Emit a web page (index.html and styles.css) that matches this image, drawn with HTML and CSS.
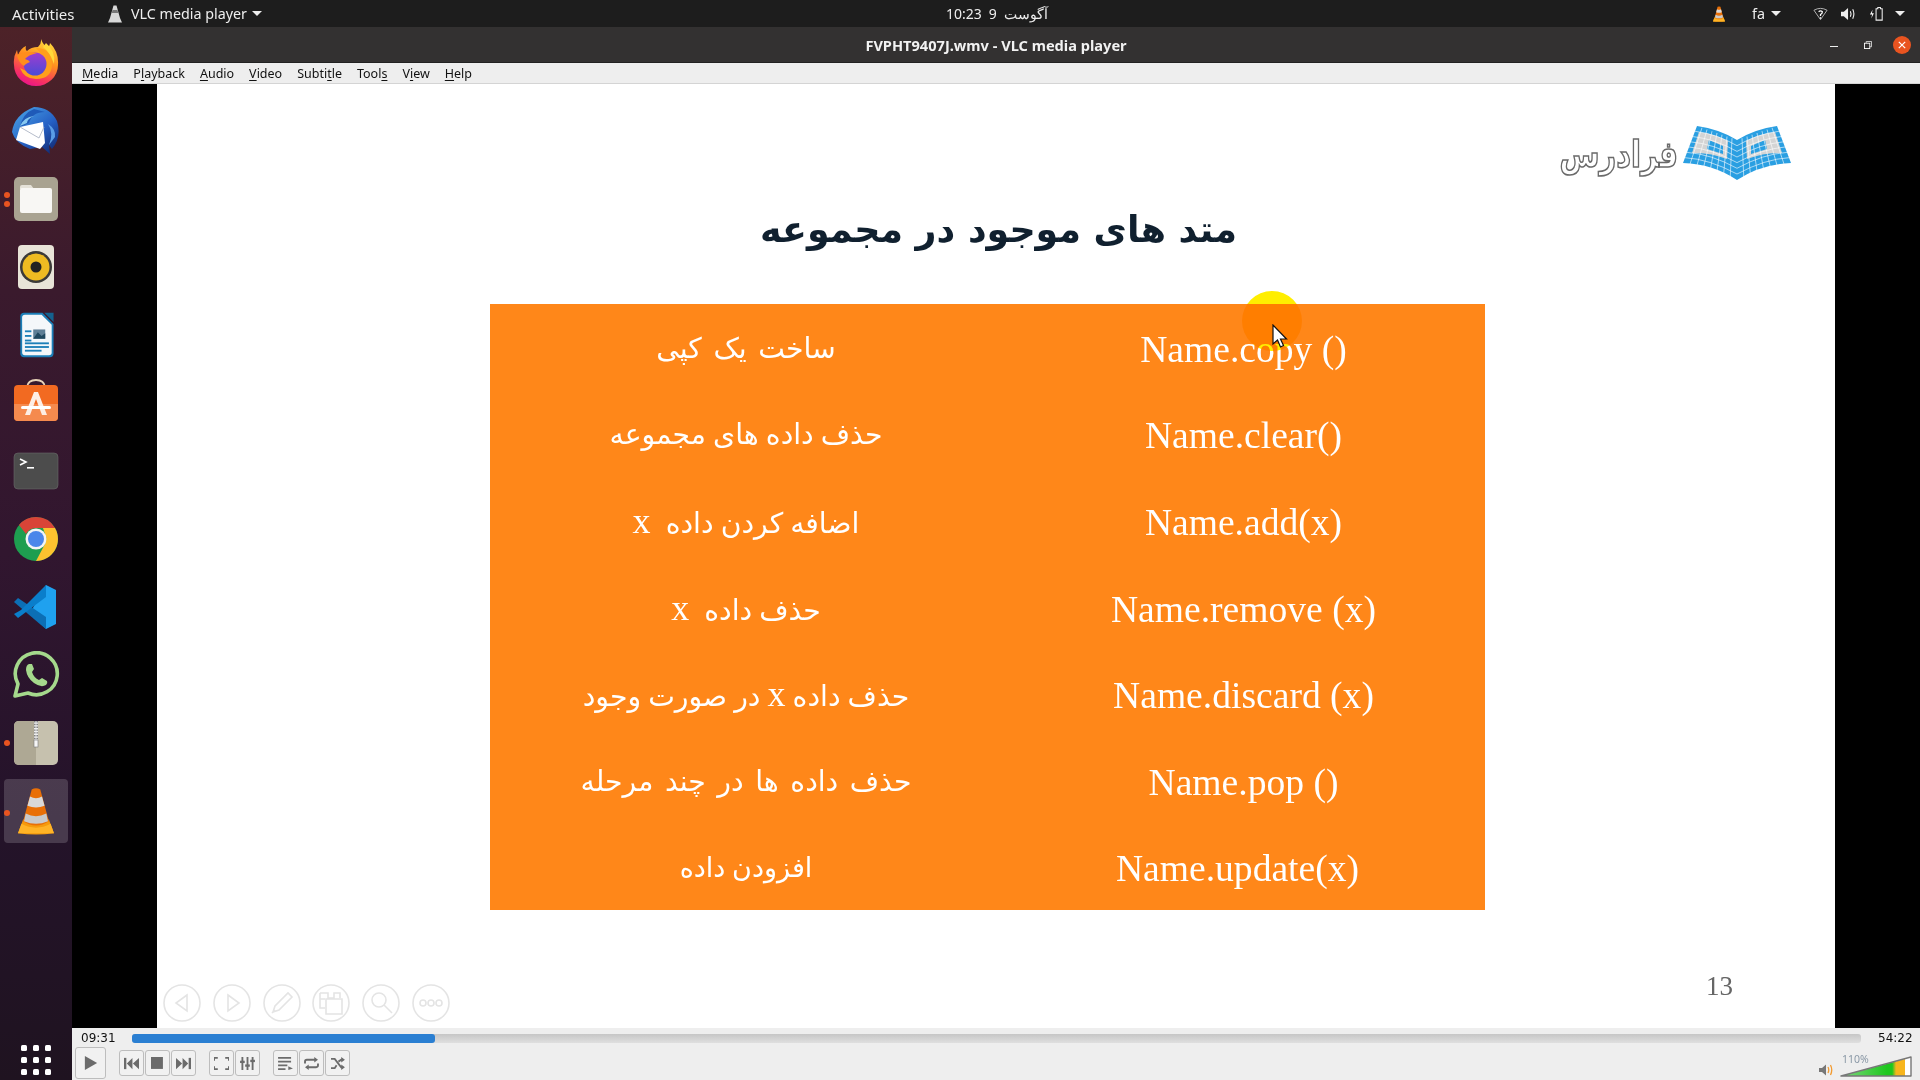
FILE: index.html
```html
<!DOCTYPE html>
<html lang="fa">
<head>
    <meta charset="UTF-8">
    <title>FVPHT9407J.wmv - VLC media player</title>
    <link rel="stylesheet" href="styles.css">
</head>
<body>
    <svg class="defs" width="0" height="0">
        <defs>
            <symbol id="cone" viewBox="0 0 48 56">
                <path d="M3 54 L9 38 H39 L45 54 Q24 57 3 54Z" fill="#f59a0c"/>
                <path d="M3 54 L7 43 Q24 52 41 43 L45 54Z" fill="#ffb326"/>
                <path d="M19 3 Q24 0 29 3 L39 40 Q24 50 9 40Z" fill="#e96f06"/>
                <path d="M17 11 Q24 15 31 11 L34 22 Q24 26 14 22Z" fill="#d9d9d9"/>
                <path d="M12 31 Q24 37 36 31 L38 40 Q24 46 10 40Z" fill="#c9c9c9"/>
            </symbol>
            <g id="page">
                <path class="page-blue" d="M14 0 Q36 3 54 14 V54 Q30 38 0 37Z"/>
                <path class="page-grey" d="M16 6 Q32 8 45 15 L44 33 Q26 26 9 27Z"/>
                <path class="page-blue" d="M26 14 L40 20 V28 L24 23Z"/>
                <path class="page-grid" d="M19 1.7 L6.7 39 M24 3.5 L13.5 41 M29 5.2 L20.2 43 M34 7 L27 45.5 M39 8.7 L33.7 47.6 M44 10.5 L40.5 49.7 M49 12.2 L47.2 51.9 M12 5.3 Q34 8 54 19.7 M10 10.6 Q32 13 54 25.4 M8 15.9 Q31 18 54 31 M6 21 Q29 23 54 36.6 M4 26.4 Q28 28 54 42.3 M2 31.7 Q26 33 54 48"/>
            </g>
        </defs>
    </svg>

    <header class="topbar">
        <div class="top-left">
            <span class="activities">Activities</span>
            <svg class="app-cone" viewBox="0 0 14 18"><path d="M5.5 0.5 H8.5 L12 13 L14 17.5 H0 L2 13Z" fill="#d8d8d8"/><path d="M4.5 5 H9.5 L10.3 8 H3.7Z" fill="#777"/></svg>
            <span class="app-name">VLC media player</span>
            <i class="caret"></i>
        </div>
        <div class="clock"><span>10:23</span><span>9</span><span dir="rtl">آگوست</span></div>
        <div class="tray">
            <svg class="tray-cone"><use href="#cone"/></svg>
            <span class="lang">fa</span>
            <i class="caret"></i>
            <svg class="tray-icon wifi" viewBox="0 0 16 14"><path d="M1 3 Q8 -1 15 3 L8 13Z" fill="none" stroke="#bbb" stroke-width="1"/><path d="M6 4.5 Q8 3 10 4.5 Q10 6.5 8 7.5 V9 M8 10.5 V12" fill="none" stroke="#fff" stroke-width="1.3"/></svg>
            <svg class="tray-icon vol" viewBox="0 0 16 14"><path d="M0 4.5 H3 L7.5 0.5 V13.5 L3 9.5 H0Z" fill="#eee"/><path d="M10 4 Q11.5 7 10 10 M12.5 2 Q15 7 12.5 12" fill="none" stroke="#eee" stroke-width="1.2"/></svg>
            <svg class="tray-icon batt" viewBox="0 0 16 16"><path d="M3.5 3 L0.5 8.5 H3 L2 13 L5 7 H2.8Z" fill="#fff"/><path d="M8 2 H9.5 V0.5 H12.5 V2 H14.5 V15 H7.5 V2Z" fill="none" stroke="#eee" stroke-width="1.2"/></svg>
            <i class="caret"></i>
        </div>
    </header>

    <div class="desktop">
        <nav class="dock">
            <div class="dock-item">
                <svg viewBox="0 1 48 48">
                    <defs>
                        <linearGradient id="fx" x1="0.75" y1="0" x2="0.35" y2="1"><stop offset="0" stop-color="#ffe13f"/><stop offset="0.45" stop-color="#ff8f1f"/><stop offset="0.8" stop-color="#f8345f"/><stop offset="1" stop-color="#e9148a"/></linearGradient>
                        <linearGradient id="fg" x1="0.5" y1="0" x2="0.5" y2="1"><stop offset="0" stop-color="#a03ccf"/><stop offset="1" stop-color="#4a4bd6"/></linearGradient>
                    </defs>
                    <path d="M29 0 Q30 6 36 10 Q38 7 38 5 Q47 14 46 27 A22 21 0 0 1 2 27 Q1 19 5 12 L6 17 Q9 10 14 8 Q13 12 15 13 Q19 9 26 9 Q30 5 29 0Z" fill="url(#fx)"/>
                    <path d="M24 10 Q40 10 40 26 Q40 41 24 41 Q12 41 8 30 Q22 38 30 28 Q34 20 24 10Z" fill="#ff9f1c"/>
                    <circle cx="23" cy="26" r="11.5" fill="url(#fg)"/>
                    <path d="M5 17 Q13 12 25 15 Q16 17 13 21 Q17 22 18 24 Q13 26 12 28 Q6 24 5 17Z" fill="#ff8d1c"/>
                    <path d="M34 5 Q44 13 42 26 Q38 14 31 9Z" fill="#ffd93a"/>
                </svg>
            </div>
            <div class="dock-item">
                <svg viewBox="0 0 48 48">
                    <defs><linearGradient id="tb" x1="0.1" y1="0" x2="0.9" y2="1"><stop offset="0" stop-color="#4ba4e6"/><stop offset="0.55" stop-color="#2560c4"/><stop offset="1" stop-color="#10276f"/></linearGradient></defs>
                    <path d="M22 0 Q38 0 45 14 Q50 30 40 42 L37 38 L38 47 L30 40 L18 42 Q3 36 0 25 Q2 8 22 0Z" fill="url(#tb)"/>
                    <path d="M8 20 Q11 6 22 2 L33 5 Q20 5 17 16Z" fill="#1f5ab8"/>
                    <path d="M8 19 Q12 10 22 9 Q15 12 15 16Z" fill="#86c8f0"/>
                    <path d="M8 20 L31 15 L33 36 L28 42 L4 33Z" fill="#fff"/>
                    <path d="M8 20 L27 31 L32 20" fill="none" stroke="#adb4c4" stroke-width="0.9"/>
                    <path d="M36 17 Q42 26 37 38 L43 30 Q44 22 36 17Z" fill="#5a9de6"/>
                </svg>
            </div>
            <div class="dock-item">
                <svg viewBox="0 0 48 48">
                    <rect x="2" y="2" width="44" height="44" rx="5" fill="#a9a391"/>
                    <path d="M8 12 Q8 10 10 10 H19 L22 14 H8Z" fill="#e5e2d8"/>
                    <rect x="8" y="13" width="32" height="25" rx="2" fill="#f8f7f4"/>
                </svg>
                <i class="dot dot-top"></i><i class="dot dot-low"></i>
            </div>
            <div class="dock-item">
                <svg viewBox="0 0 48 48">
                    <rect x="6" y="2" width="36" height="44" rx="4" fill="#e8e4d8"/>
                    <circle cx="24" cy="24" r="16" fill="#3b3a38"/>
                    <circle cx="24" cy="24" r="13.5" fill="#eebb22"/>
                    <circle cx="24" cy="24" r="5.5" fill="#222"/>
                </svg>
            </div>
            <div class="dock-item">
                <svg viewBox="0 -2 48 52">
                    <path d="M7 4 Q7 0 11 0 H31 L43 12 V44 Q43 48 39 48 H11 Q7 48 7 44Z" fill="#1c7fb8"/>
                    <path d="M9 5 Q9 2 12 2 H30 L41 13 V43 Q41 46 38 46 H12 Q9 46 9 43Z" fill="#f4f7fa"/>
                    <path d="M33 0 H43 V10Z" fill="#15628f"/>
                    <rect x="12" y="19" width="7" height="2" fill="#1c7fb8"/><rect x="12" y="24" width="7" height="2" fill="#1c7fb8"/><rect x="12" y="29" width="7" height="2" fill="#1c7fb8"/>
                    <rect x="21" y="18" width="13" height="10" fill="#5f7f96"/><path d="M21 28 L26 21 L30 25 L34 22 V28Z" fill="#20485f"/>
                    <rect x="12" y="32" width="26" height="2" fill="#1c7fb8"/><rect x="12" y="36" width="26" height="2" fill="#1c7fb8"/><rect x="12" y="40" width="18" height="2" fill="#1c7fb8"/>
                </svg>
            </div>
            <div class="dock-item">
                <svg viewBox="0 0 48 48">
                    <path d="M15 8 Q16 1 24 1 Q32 1 33 8" fill="none" stroke="#e8d3b8" stroke-width="1.8"/>
                    <rect x="2" y="6" width="44" height="36" rx="4" fill="#f26a21"/>
                    <path d="M2 25 H46 V38 Q46 42 42 42 H6 Q2 42 2 38Z" fill="#f58a4e"/>
                    <path d="M22 13 H26 L35 36 H30 L24 20 L18 36 H13Z" fill="#fdeee5"/>
                    <rect x="9" y="27" width="30" height="3" rx="1.5" fill="#fff"/>
                </svg>
            </div>
            <div class="dock-item">
                <svg viewBox="0 0 48 48">
                    <rect x="2" y="6" width="44" height="36" rx="4" fill="#4c4c4c"/>
                    <rect x="2" y="6" width="44" height="36" rx="4" fill="none" stroke="#6a6a6a" stroke-width="0.6"/>
                    <path d="M8 12 L14 15 L8 18" fill="none" stroke="#fff" stroke-width="1.6"/>
                    <rect x="15" y="20" width="7" height="1.6" fill="#fff"/>
                </svg>
            </div>
            <div class="dock-item">
                <svg viewBox="0 0 48 48">
                    <circle cx="24" cy="24" r="22" fill="#1e9e50"/>
                    <path d="M24 2 A22 22 0 0 1 43 13 H24 A11 11 0 0 0 14 19 L7 10 A22 22 0 0 1 24 2Z" fill="#d94437"/>
                    <path d="M43 13 A22 22 0 0 1 24 46 L33 29 A11 11 0 0 0 33 19 L31 13Z" fill="#fdc22f"/>
                    <circle cx="24" cy="24" r="10.5" fill="#f4f4f4"/>
                    <circle cx="24" cy="24" r="8" fill="#4a86ea"/>
                </svg>
            </div>
            <div class="dock-item">
                <svg viewBox="0 0 48 48">
                    <path d="M34 2 L44 7 V41 L34 46 L18 30 Z" fill="#1fa1ef"/>
                    <path d="M6 15 L2 19 L29 42 L34 46 V34Z" fill="#0c6fb5"/>
                    <path d="M34 2 L9 27 L2 31 L6 35 L34 14Z" fill="#0a7ecb"/>
                </svg>
            </div>
            <div class="dock-item">
                <svg viewBox="0 0 48 48">
                    <path d="M3 45 L6 33 A21 21 0 1 1 16 42Z" fill="none" stroke="#a5d98c" stroke-width="3.6" stroke-linejoin="round"/>
                    <path d="M17 13 Q14 14 14 19 Q15 27 22 32 Q29 37 34 34 Q36 32 35 30 L30 27 L27 29 Q22 27 20 21 L22 18 L20 13Z" fill="#a5d98c"/>
                </svg>
            </div>
            <div class="dock-item">
                <svg viewBox="0 0 48 48">
                    <rect x="2" y="2" width="44" height="44" rx="5" fill="#c6c1ae"/>
                    <path d="M7 2 H24 V46 H7 Q2 46 2 41 V7 Q2 2 7 2Z" fill="#aea894"/>
                    <path d="M22 2 H26 V24 H22Z" fill="#eee"/>
                    <path d="M22.8 2 V24 M25.2 2 V24" stroke="#777" stroke-width="1.4" stroke-dasharray="1.4 1.4"/>
                    <rect x="22" y="21" width="4" height="7" fill="#f6f6f6" stroke="#777" stroke-width="0.6"/>
                </svg>
                <i class="dot"></i>
            </div>
            <div class="dock-item active">
                <svg class="dock-cone"><use href="#cone"/></svg>
                <i class="dot"></i>
            </div>
            <div class="apps-grid">
                <i></i><i></i><i></i><i></i><i></i><i></i><i></i><i></i><i></i>
            </div>
        </nav>

        <div class="window">
            <div class="titlebar">
                <span></span>
                <span class="win-title">FVPHT9407J.wmv - VLC media player</span>
                <div class="win-btns">
                    <i class="win-min"></i>
                    <svg class="win-max" viewBox="0 0 9 9"><path d="M2.5 2 V0.5 H8.5 V6.5 H6.5" fill="none" stroke="#ddd"/><rect x="0.5" y="2.5" width="6" height="6" fill="none" stroke="#fff"/></svg>
                    <span class="win-close"><svg viewBox="0 0 10 10"><path d="M1 1 L9 9 M9 1 L1 9" stroke="#fff" stroke-width="1.5"/></svg></span>
                </div>
            </div>

            <div class="menubar">
                <span><u>M</u>edia</span>
                <span>P<u>l</u>ayback</span>
                <span><u>A</u>udio</span>
                <span><u>V</u>ideo</span>
                <span>Subti<u>t</u>le</span>
                <span>Tool<u>s</u></span>
                <span>V<u>i</u>ew</span>
                <span><u>H</u>elp</span>
            </div>

            <div class="video">
                <div class="slide">
                    <div class="logo">
                        <span class="logo-text" dir="rtl">فرادرس</span>
                        <svg class="logo-book" viewBox="0 0 108 54">
                            <use href="#page"/>
                            <use href="#page" transform="matrix(-1 0 0 1 108 0)"/>
                        </svg>
                    </div>

                    <h1 class="slide-title" dir="rtl">متد های موجود در مجموعه</h1>

                    <div class="methods">
                        <div class="fa loose" dir="rtl">ساخت یک کپی</div>
                        <div class="en">Name.copy ()</div>
                        <div class="fa" dir="rtl">حذف داده های مجموعه</div>
                        <div class="en">Name.clear()</div>
                        <div class="fa" dir="rtl">اضافه کردن داده <span class="var wide">x</span></div>
                        <div class="en">Name.add(x)</div>
                        <div class="fa" dir="rtl">حذف داده <span class="var wide">x</span></div>
                        <div class="en">Name.remove (x)</div>
                        <div class="fa" dir="rtl">حذف داده <span class="var">x</span> در صورت وجود</div>
                        <div class="en">Name.discard (x)</div>
                        <div class="fa loose" dir="rtl">حذف داده ها در چند مرحله</div>
                        <div class="en">Name.pop ()</div>
                        <div class="fa tight" dir="rtl">افزودن داده</div>
                        <div class="en off-left">Name.update(x)</div>
                    </div>

                    <span class="page-num">13</span>

                    <div class="slide-nav">
                        <svg viewBox="0 0 38 38"><circle cx="19" cy="19" r="18"/><path d="M24 11 L13 19 L24 27Z"/></svg>
                        <svg viewBox="0 0 38 38"><circle cx="19" cy="19" r="18"/><path d="M15 11 L26 19 L15 27Z"/></svg>
                        <svg viewBox="0 0 38 38"><circle cx="19" cy="19" r="18"/><path d="M10 28 L12 22 L25 9 L29 13 L16 26Z M9 29 L12 26"/></svg>
                        <svg viewBox="0 0 38 38"><circle cx="19" cy="19" r="18"/><path d="M8 9 H16 V14 H22 V9 H28 V14 M8 9 V24 H13 M8 15 H13 M14 15 H30 V30 H14Z"/></svg>
                        <svg viewBox="0 0 38 38"><circle cx="19" cy="19" r="18"/><circle cx="17" cy="16" r="7"/><path d="M22 21 L30 29"/></svg>
                        <svg viewBox="0 0 38 38"><circle cx="19" cy="19" r="18"/><circle cx="11" cy="19" r="3"/><circle cx="19" cy="19" r="3"/><circle cx="27" cy="19" r="3"/></svg>
                    </div>

                    <i class="highlight"></i>
                    <svg class="pointer" viewBox="0 0 16 24"><path d="M1 1 V20 L5.5 16 L8.5 23 L11.5 21.5 L8.5 15 H14.5Z" fill="#fff" stroke="#111" stroke-width="1.2"/></svg>
                </div>
            </div>

            <footer class="controls">
                <div class="seek-row">
                    <span class="time">09:31</span>
                    <div class="seek"><div class="seek-fill"></div></div>
                    <span class="time">54:22</span>
                </div>
                <div class="btn-row">
                    <button class="ctl play"><svg viewBox="0 0 16 18"><path d="M1 1 L15 9 L1 17Z"/></svg></button>
                    <div class="ctl-group">
                        <button class="ctl"><svg viewBox="0 0 16 12"><rect x="0" y="0" width="2.5" height="12"/><path d="M9 0 V12 L3 6Z M16 0 V12 L9.5 6Z"/></svg></button>
                        <button class="ctl"><svg viewBox="0 0 12 12"><rect width="11" height="11"/></svg></button>
                        <button class="ctl"><svg viewBox="0 0 16 12"><path d="M0 0 V12 L6.5 6Z M7 0 V12 L13 6Z"/><rect x="13.5" y="0" width="2.5" height="12"/></svg></button>
                    </div>
                    <div class="ctl-group">
                        <button class="ctl"><svg viewBox="0 0 16 14"><path class="ln" d="M0 4 V1 H4 M12 1 H16 V4 M0 10 V13 H4 M12 13 H16 V10"/></svg></button>
                        <button class="ctl"><svg viewBox="0 0 16 14"><path class="ln" d="M2.5 0 V14 M8 0 V14 M13.5 0 V14"/><rect x="0" y="4" width="5" height="2.5"/><rect x="5.5" y="8" width="5" height="2.5"/><rect x="11" y="3" width="5" height="2.5"/></svg></button>
                    </div>
                    <div class="ctl-group">
                        <button class="ctl"><svg viewBox="0 0 16 14"><path class="ln" d="M0 1 H14 M0 5 H14 M0 9 H10 M0 13 H8"/><path d="M11 10 L16 12.5 L11 14Z"/></svg></button>
                        <button class="ctl"><svg viewBox="0 0 16 14"><path class="ln" d="M1 7 V5 Q1 3 3 3 H12 M15 7 V9 Q15 11 13 11 H4"/><path d="M11 0 L15 3 L11 6Z M5 8 L1 11 L5 14Z"/></svg></button>
                        <button class="ctl"><svg viewBox="0 0 16 14"><path class="ln" d="M1 2 L5 2 L12 11 H14 M1 12 H5 L7 9 M9 5 L12 3 H14"/><path d="M12 0 L16 3 L12 6Z M12 8 L16 11 L12 14Z"/></svg></button>
                    </div>
                    <div class="volume">
                        <svg class="vol-icon" viewBox="0 0 14 12"><path d="M0 4 H3 L7 0.5 V11.5 L3 8 H0Z" fill="#777"/><path d="M9 3 Q10.5 6 9 9 M11.5 1 Q14 6 11.5 11" fill="none" stroke="#f39a2e" stroke-width="1.3"/></svg>
                        <span class="vol-text">110%</span>
                        <svg class="vol-bar" viewBox="0 0 72 21">
                            <defs><linearGradient id="vg" x1="0" y1="0" x2="1" y2="0"><stop offset="0" stop-color="#7fd67f"/><stop offset="0.72" stop-color="#1ec71e"/><stop offset="0.8" stop-color="#1ec71e"/><stop offset="0.86" stop-color="#f7b51c"/><stop offset="1" stop-color="#f7b51c"/></linearGradient></defs>
                            <path d="M1 20 H71 V1Z" fill="#fff"/>
                            <path d="M1 20 H65 V3Z" fill="url(#vg)"/>
                            <path d="M1 20 H71 V1Z" fill="none" stroke="#777" stroke-width="1.4" stroke-linejoin="round"/>
                        </svg>
                    </div>
                </div>
            </footer>
        </div>
    </div>
</body>
</html>
```

FILE: styles.css
```css
* {
    box-sizing: border-box;
}

html, body {
    margin: 0;
    padding: 0;
    width: 1920px;
    height: 1080px;
    overflow: hidden;
}

body {
    display: flex;
    flex-direction: column;
    font-family: "Noto Sans", sans-serif;
    background-color: #000;
}

.defs {
    position: absolute;
}

/* top bar */
.topbar {
    display: flex;
    align-items: center;
    height: 27px;
    flex: none;
    background-color: #1d1d1d;
    color: #eee;
    font-size: 14.3px;
}

.top-left {
    display: flex;
    align-items: center;
    width: 946px;
    padding-left: 12px;
}

.activities {
    width: 96px;
    font-size: 15px;
}

.app-cone {
    width: 14px;
    height: 18px;
    margin-right: 9px;
}

.app-name {
    margin-right: 5px;
}

.caret {
    display: inline-block;
    width: 0;
    height: 0;
    border-left: 5px solid transparent;
    border-right: 5px solid transparent;
    border-top: 5px solid #eee;
}

.clock {
    display: flex;
    gap: 7px;
    font-size: 14px;
}

.tray {
    display: flex;
    align-items: center;
    margin-left: auto;
    padding-right: 15px;
}

.tray-cone {
    width: 14px;
    height: 16px;
    margin-right: 26px;
}

.lang {
    margin-right: 6px;
}

.tray-icon {
    width: 15px;
    height: 14px;
}

.wifi {
    margin-left: 32px;
}

.vol {
    margin-left: 13px;
}

.batt {
    margin-left: 13px;
    margin-right: 11px;
}

/* dock */
.desktop {
    display: flex;
    flex: 1;
    min-height: 0;
}

.dock {
    position: relative;
    display: flex;
    flex-direction: column;
    align-items: center;
    width: 72px;
    flex: none;
    padding-top: 2px;
    background: linear-gradient(180deg, #4d2228 0, #3a1a2d 25%, #31162f 50%, #24132a 75%, #1f1320 100%);
}

.dock-item {
    position: relative;
    display: flex;
    align-items: center;
    justify-content: center;
    width: 64px;
    height: 68px;
    flex: none;
}

.dock-item svg {
    width: 48px;
    height: 48px;
}

.dock-item.active {
    height: 64px;
    margin-top: 2px;
    border-radius: 4px;
    background-color: rgba(255, 255, 255, 0.17);
}

.dock-item svg.dock-cone {
    width: 42px;
    height: 48px;
}

.dot {
    position: absolute;
    left: 0;
    top: 31px;
    width: 6px;
    height: 6px;
    border-radius: 50%;
    background-color: #e95420;
}

.dot-top {
    top: 27px;
}

.dot-low {
    top: 36px;
}

.apps-grid {
    position: absolute;
    left: 21px;
    bottom: 5px;
    display: grid;
    grid-template-columns: repeat(3, 6px);
    gap: 6px;
}

.apps-grid i {
    height: 6px;
    border-radius: 1.5px;
    background-color: #fff;
}

/* window */
.window {
    display: flex;
    flex-direction: column;
    flex: 1;
    min-width: 0;
}

.titlebar {
    display: grid;
    grid-template-columns: 1fr auto 1fr;
    align-items: center;
    height: 36px;
    flex: none;
    background-color: #333131;
    border-bottom: 1px solid #222;
    color: #f2f2f2;
    font-size: 14px;
}

.win-title {
    padding-top: 1px;
    font-weight: 700;
    font-size: 14.6px;
}

.win-btns {
    display: flex;
    align-items: center;
    justify-content: flex-end;
    padding-right: 9px;
}

.win-min {
    width: 8px;
    height: 1px;
    margin-top: 4px;
    background-color: #eee;
}

.win-max {
    width: 8px;
    height: 8px;
    margin-left: 26px;
}

.win-close {
    display: flex;
    align-items: center;
    justify-content: center;
    width: 18px;
    height: 18px;
    margin-left: 21px;
    border-radius: 50%;
    background-color: #e95420;
}

.win-close svg {
    width: 8px;
    height: 8px;
}

.menubar {
    display: flex;
    align-items: center;
    gap: 15px;
    height: 21px;
    flex: none;
    padding-left: 10px;
    background-color: #eee;
    border-bottom: 1px solid #d4d4d4;
    color: #111;
    font-size: 12.5px;
}

.menubar u {
    text-underline-offset: 2px;
}

.video {
    display: flex;
    justify-content: center;
    height: 944px;
    flex: none;
    background-color: #000;
}

/* slide */
.slide {
    position: relative;
    width: 1678px;
    background-color: #fff;
}

.logo {
    position: absolute;
    left: 1405px;
    top: 42px;
    display: flex;
    align-items: flex-start;
    gap: 5px;
}

.logo-text {
    width: 116px;
    padding-top: 3px;
    white-space: nowrap;
    font-family: "DejaVu Sans", sans-serif;
    font-size: 29px;
    font-weight: 700;
    line-height: 50px;
    color: #fff;
    -webkit-text-stroke: 1.3px #6a6a6a;
    transform: scaleY(1.25);
}

.logo-book {
    width: 108px;
    height: 54px;
}

.page-blue {
    fill: #2a9fe2;
}

.page-grey {
    fill: #d4d4d4;
}

.page-grid {
    fill: none;
    stroke: #fff;
    stroke-width: 0.6;
}

.slide-title {
    height: 80px;
    margin: 106px 0 34px;
    padding-left: 5px;
    text-align: center;
    font-family: "DejaVu Sans", sans-serif;
    font-size: 36.4px;
    font-weight: 700;
    line-height: 80px;
    color: #10202f;
}

.methods {
    display: grid;
    grid-template-columns: 512px 483px;
    grid-auto-rows: 86.6px;
    align-items: center;
    width: 995px;
    margin-left: 333px;
    background-color: #ff8719;
    color: #fff;
    text-align: center;
    font-family: "Liberation Serif", serif;
}

.fa {
    padding-top: 2px;
    font-family: "Liberation Serif", "DejaVu Sans", serif;
    font-size: 28.3px;
}

.fa.loose {
    word-spacing: 4.5px;
}

.fa.tight {
    font-size: 27px;
}

.var {
    font-size: 36px;
    line-height: 1;
}

.var.wide {
    margin-right: 8px;
}

.en {
    padding-top: 4px;
    font-size: 37.6px;
}

.off-left {
    padding-right: 12px;
}

.page-num {
    position: absolute;
    left: 1549px;
    top: 887px;
    font-family: "Liberation Serif", serif;
    font-size: 27px;
    color: #666;
}

.slide-nav {
    position: absolute;
    left: 6px;
    top: 900px;
    display: flex;
    gap: 11.8px;
}

.slide-nav svg {
    width: 38px;
    height: 38px;
    fill: none;
    stroke: #e4e4e4;
    stroke-width: 1.6;
}

.highlight {
    position: absolute;
    left: 1085px;
    top: 207px;
    width: 60px;
    height: 60px;
    border-radius: 50%;
    background-color: #ffee00;
    mix-blend-mode: multiply;
}

.pointer {
    position: absolute;
    left: 1115px;
    top: 240px;
    width: 16px;
    height: 24px;
}

/* player controls */
.controls {
    display: flex;
    flex-direction: column;
    flex: 1;
    padding: 3px 8px 0 3px;
    background-color: #eee;
    color: #111;
}

.seek-row {
    display: flex;
    align-items: center;
    height: 14px;
}

.time {
    width: 57px;
    padding-left: 6px;
    font-family: "DejaVu Sans", sans-serif;
    font-size: 12px;
}

.seek {
    width: 1730px;
    height: 9px;
    border-radius: 3px;
    background: linear-gradient(180deg, #c6c6c6, #dfdfdf);
}

.time:last-child {
    width: 51px;
    padding-left: 17px;
    white-space: nowrap;
}

.seek-fill {
    width: 303px;
    height: 9px;
    border-radius: 3px;
    background-color: #2a7fd2;
}

.btn-row {
    display: flex;
    align-items: center;
    margin-top: 2px;
}

.ctl-group {
    display: flex;
    gap: 1px;
    margin-left: 13px;
}

.ctl {
    display: flex;
    align-items: center;
    justify-content: center;
    width: 25px;
    height: 26px;
    padding: 0;
    border: 1px solid #bdbdbd;
    border-radius: 3px;
    background-color: #f1f1f1;
}

.ctl svg {
    width: 15px;
    height: 13px;
    fill: #6b6b6b;
}

.ctl .ln {
    fill: none;
    stroke: #6b6b6b;
    stroke-width: 2;
}

.play {
    width: 31px;
    height: 32px;
}

.play svg {
    width: 14px;
    height: 16px;
}

.volume {
    position: relative;
    display: flex;
    align-items: flex-end;
    align-self: flex-start;
    margin-left: auto;
    height: 30px;
}

.vol-icon {
    width: 14px;
    height: 12px;
    margin-right: 7px;
    margin-bottom: 1px;
}

.vol-text {
    position: absolute;
    left: 23px;
    top: 5px;
    font-size: 10.5px;
    color: #8a98a6;
}

.vol-bar {
    width: 72px;
    height: 21px;
}
```
